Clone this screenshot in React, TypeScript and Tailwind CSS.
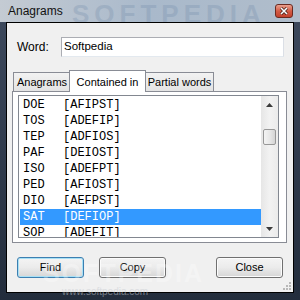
import React from 'react'

const rows: [string, string][] = [
  ['DOE', '[AFIPST]'],
  ['TOS', '[ADEFIP]'],
  ['TEP', '[ADFIOS]'],
  ['PAF', '[DEIOST]'],
  ['ISO', '[ADEFPT]'],
  ['PED', '[AFIOST]'],
  ['DIO', '[AEFPST]'],
  ['SAT', '[DEFIOP]'],
  ['SOP', '[ADEFIT]'],
]

const sans = { fontFamily: '"Liberation Sans", Arial, sans-serif' }
const mono = { fontFamily: '"Liberation Mono", "Courier New", monospace' }

function Btn({ label, focused }: { label: string; focused?: boolean }) {
  return (
    <div
      className={
        'w-[67px] h-[21px] rounded-[3px] flex items-center justify-center text-[11px] text-black bg-gradient-to-b from-[#f4f4f4] via-[#ebebeb] to-[#d6d6d6] ' +
        (focused
          ? 'border border-[#3c7fb1] shadow-[inset_0_0_0_1px_#a8e0f5]'
          : 'border border-[#707070] shadow-[inset_0_0_0_1px_#fcfcfc]')
      }
      style={sans}
    >
      {label}
    </div>
  )
}

export default function App() {
  return (
    <div
      className="w-[300px] h-[300px] relative overflow-hidden flex flex-col bg-gradient-to-b from-[#3e4a5e] to-[#232d3c]"
      style={sans}
    >
      {/* title bar */}
      <div className="relative h-[22px] flex items-center pl-[8px] pr-[7px] bg-gradient-to-r from-[#c4cbd3] via-[#a9b9cb] to-[#b0bdcb] overflow-hidden">
        <span
          className="absolute left-[72px] top-[-5px] text-[26px] font-bold tracking-[5px] text-[#6a84a4] opacity-25 pointer-events-none"
          style={sans}
        >
          SOFTPEDIA
        </span>
        <span className="relative text-[12px] text-[#111]" style={sans}>
          Anagrams
        </span>
        <div className="relative ml-auto w-[18px] h-[14px] rounded-[3px] border border-[#6b2a20] bg-gradient-to-b from-[#e9a08e] via-[#d35b45] to-[#c3412c] flex items-center justify-center">
          <svg width="8" height="8" viewBox="0 0 8 8">
            <path d="M1 1 L7 7 M7 1 L1 7" stroke="#3a1a14" strokeWidth="3" />
            <path d="M1 1 L7 7 M7 1 L1 7" stroke="#fff" strokeWidth="1.6" />
          </svg>
        </div>
      </div>

      {/* client */}
      <div className="flex-1 pl-[6px] pr-[6px] pb-[7px]">
        <div className="relative h-full border border-black bg-[#f0f0f0] flex flex-col">
          {/* word row */}
          <div className="mt-[14px] pl-[10px] flex items-center">
            <span className="w-[44px] text-[12px] text-black">Word:</span>
            <div className="w-[223px] h-[20px] bg-white border border-[#abadb3] border-b-[#e3e9ef] border-r-[#dbdfe6] flex items-center pl-[2px] text-[11.5px] text-black">
              Softpedia
            </div>
          </div>

          {/* tabs */}
          <div className="mt-[13px] ml-[5px] w-[275px]">
            <div className="flex items-end h-[21px]">
              <div className="ml-[1px] w-[58px] h-[19px] border border-b-0 border-[#898c95] bg-gradient-to-b from-[#f2f2f2] to-[#e3e3e3] flex items-center justify-center text-[11px] text-black">
                Anagrams
              </div>
              <div className="-ml-[2px] -mb-[1px] relative z-10 w-[77px] h-[22px] border border-b-0 border-[#898c95] bg-white flex items-start pt-[3px] justify-center text-[11px] text-black">
                Contained in
              </div>
              <div className="-ml-[1px] w-[69px] h-[19px] border border-b-0 border-[#898c95] bg-gradient-to-b from-[#f2f2f2] to-[#e3e3e3] flex items-center justify-center text-[11px] text-black">
                Partial words
              </div>
            </div>
            <div className="h-[152px] border border-[#898c95] bg-white pt-[3px] pl-[5px]">
              <div className="w-[261px] h-[143px] border border-[#828790] flex overflow-hidden">
                <div className="w-[242px] pl-[1px] pt-[1px] overflow-hidden">
                  {rows.map(([w, l]) => {
                    const sel = w === 'SAT'
                    return (
                      <div
                        key={w}
                        className={
                          'h-[16px] flex items-center pl-[3px] text-[12px] whitespace-pre ' +
                          (sel ? 'bg-[#3399ff] text-white' : 'text-black')
                        }
                        style={mono}
                      >
                        <span className="w-[40px]">{w}</span>
                        <span>{l}</span>
                      </div>
                    )
                  })}
                </div>
                {/* scrollbar */}
                <div className="w-[17px] flex flex-col bg-gradient-to-r from-[#e6e6e6] via-[#f2f2f2] to-[#ebebeb]">
                  <div className="h-[17px] flex items-center justify-center">
                    <svg width="7" height="4" viewBox="0 0 7 4">
                      <path d="M0 4 L3.5 0 L7 4 Z" fill="#3b3b3b" />
                    </svg>
                  </div>
                  <div className="mt-[16px] mx-[2px] h-[16px] rounded-[2px] border border-[#989898] bg-gradient-to-r from-[#f4f4f4] via-[#e8e8e8] to-[#d4d4d4]" />
                  <div className="mt-auto h-[17px] flex items-center justify-center">
                    <svg width="7" height="4" viewBox="0 0 7 4">
                      <path d="M0 0 L7 0 L3.5 4 Z" fill="#3b3b3b" />
                    </svg>
                  </div>
                </div>
              </div>
            </div>
          </div>

          {/* buttons */}
          <div className="mt-[14px] pl-[10px] pr-[10px] flex items-center">
            <Btn label="Find" focused />
            <div className="ml-[15px]">
              <Btn label="Copy" />
            </div>
            <div className="ml-auto">
              <Btn label="Close" />
            </div>
          </div>

          {/* watermark */}
          <span className="absolute left-[36px] top-[232px] text-[25px] font-bold tracking-[2px] text-white opacity-30 pointer-events-none">
            SOFTPEDIA
          </span>

          {/* resize grip */}
          <svg className="absolute right-[2px] bottom-[2px]" width="9" height="9" viewBox="0 0 9 9">
            {[
              [7, 1],
              [7, 4],
              [4, 4],
              [7, 7],
              [4, 7],
              [1, 7],
            ].map(([x, y]) => (
              <rect key={x + '-' + y} x={x} y={y} width="2" height="2" fill="#b8b8b8" />
            ))}
          </svg>
        </div>
      </div>
      <span className="absolute left-[62px] top-[284px] text-[10px] text-[#c8ccd2] opacity-50 pointer-events-none">
        www.softpedia.com
      </span>
    </div>
  )
}
